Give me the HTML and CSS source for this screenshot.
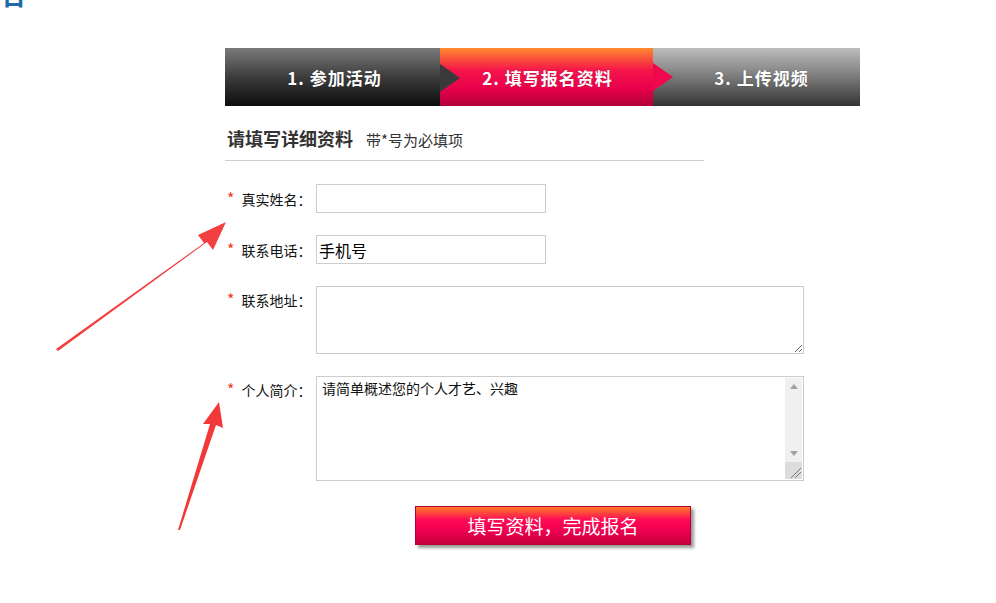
FILE: index.html
```html
<!DOCTYPE html>
<html lang="zh">
<head>
<meta charset="utf-8">
<link rel="stylesheet" href="styles.css">
</head>
<body>
<h1 class="page-title">报名</h1>
<div class="wrap">
  <div class="steps">
    <div class="step step-done">1. 参加活动</div>
    <div class="step step-active">2. 填写报名资料</div>
    <div class="step step-next">3. 上传视频</div>
  </div>
  <div class="form-head">
    <span class="form-title">请填写详细资料</span>
    <span class="form-note">带*号为必填项</span>
  </div>
  <form class="form">
    <div class="row">
      <label class="label"><span class="req">*</span>真实姓名：</label>
      <input class="input" type="text" value="">
    </div>
    <div class="row">
      <label class="label"><span class="req">*</span>联系电话：</label>
      <input class="input input-big" type="text" value="手机号">
    </div>
    <div class="row row-area">
      <label class="label"><span class="req">*</span>联系地址：</label>
      <textarea class="area area-addr"></textarea>
    </div>
    <div class="row row-area">
      <label class="label"><span class="req">*</span>个人简介：</label>
      <div class="area-box">
        <textarea class="area-intro">请简单概述您的个人才艺、兴趣</textarea>
        <div class="scrollbar">
          <span class="sb-up"></span>
          <span class="sb-track"></span>
          <span class="sb-down"></span>
          <span class="sb-corner">
            <svg width="17" height="17" viewBox="0 0 17 17"><path d="M6 16 L16 6 M10 16 L16 10" stroke="#777" stroke-width="1" fill="none"/></svg>
          </span>
        </div>
      </div>
    </div>
    <div class="actions">
      <button class="submit" type="button">填写资料，完成报名</button>
    </div>
  </form>
</div>
<svg class="arrow arrow-a" width="180" height="130" viewBox="0 0 180 130">
  <path d="M2 127 L150 21 L144 13 L172 0 L159 28 L153 20 L4 129 Z" fill="#f24040"/>
</svg>
<svg class="arrow arrow-b" width="60" height="130" viewBox="0 0 60 130">
  <path d="M1 128 L33 22 L26 22 L42 0 L46 26 L39 23 L3 128 Z" fill="#f23838"/>
</svg>
</body>
</html>
```
FILE: styles.css
```css
html, body {
  margin: 0;
  padding: 0;
  background: #fff;
}
body {
  position: relative;
  display: flow-root;
  width: 996px;
  height: 603px;
  overflow: hidden;
  font-family: "Noto Sans CJK SC", "Liberation Sans", sans-serif;
  color: #222;
}
.page-title {
  margin: -25px 0 0 -28px;
  height: 37px;
  font-size: 27px;
  line-height: 37px;
  color: #1e6aa8;
  font-weight: bold;
  white-space: nowrap;
}
.wrap {
  padding-left: 225px;
  margin-top: 36px;
}
.steps {
  display: flex;
  width: 635px;
  height: 58px;
}
.step {
  position: relative;
  display: flex;
  align-items: center;
  justify-content: center;
  color: #fff;
  font-weight: bold;
  font-size: 17px;
  letter-spacing: 1px;
  text-shadow: 0 0 1px rgba(0,0,0,0.4);
  white-space: pre;
}
.step-done {
  width: 215px;
  background: linear-gradient(#7a7a7a, #3c3c3c 50%, #0c0c0c);
  padding-left: 4px;
  box-sizing: border-box;
  z-index: 2;
}
.step-done::after {
  content: "";
  position: absolute;
  left: 100%;
  top: 16px;
  border-left: 20px solid #3a3a3a;
  border-top: 14px solid transparent;
  border-bottom: 14px solid transparent;
}
.step-active {
  width: 213px;
  background: linear-gradient(#ff8a2c, #f5164a 38%, #e8004c 70%, #b2003a);
  z-index: 1;
  padding-left: 2px;
  box-sizing: border-box;
}
.step-active::after {
  content: "";
  position: absolute;
  left: 100%;
  top: 15px;
  border-left: 20px solid #f0084c;
  border-top: 14px solid transparent;
  border-bottom: 14px solid transparent;
}
.step-next {
  width: 207px;
  background: linear-gradient(#bdbdbd, #7a7a7a 50%, #333);
  padding-left: 10px;
  box-sizing: border-box;
}
.form-head {
  display: flex;
  align-items: baseline;
  width: 479px;
  height: 55px;
  box-sizing: border-box;
  padding: 19px 0 0 2px;
  border-bottom: 1px solid #cfcfcf;
}
.form-title {
  font-size: 18px;
  font-weight: bold;
  color: #333;
}
.form-note {
  font-size: 15px;
  color: #333;
  margin-left: 13px;
}
.form {
  margin: 0;
  padding-top: 23px;
}
.row {
  display: flex;
  align-items: center;
  margin-bottom: 22px;
}
.row-area {
  align-items: flex-start;
}
.row-area .label {
  padding-top: 3px;
}
.label {
  width: 91px;
  font-size: 14px;
  color: #111;
  padding-left: 2px;
  box-sizing: border-box;
  white-space: nowrap;
  margin-top: -2px;
}
.req {
  color: #f23a1a;
  margin-right: 7px;
  font-size: 16px;
}
.input {
  width: 230px;
  height: 29px;
  box-sizing: border-box;
  border: 1px solid #ccc;
  padding: 0 2px;
  font-family: "Noto Sans CJK SC", sans-serif;
  font-size: 16px;
  color: #000;
  outline: none;
  margin: 0;
}
.area {
  width: 488px;
  box-sizing: border-box;
  border: 1px solid #ccc;
  margin: 0;
  padding: 2px 5px;
  font-family: "Noto Sans CJK SC", sans-serif;
  font-size: 14px;
  color: #111;
  outline: none;
}
.area-addr {
  height: 68px;
}
.area-box {
  display: flex;
  width: 488px;
  height: 105px;
  box-sizing: border-box;
  border: 1px solid #ccc;
  background: #fff;
}
.area-intro {
  flex: 1;
  border: 0;
  margin: 0;
  padding: 1px 5px;
  resize: none;
  outline: none;
  font-family: "Noto Sans CJK SC", sans-serif;
  font-size: 14px;
  color: #111;
  overflow: hidden;
}
.scrollbar {
  width: 17px;
  display: flex;
  flex-direction: column;
  align-items: center;
  background: #f0f0f0;
  margin: 1px 1px 1px 0;
}
.sb-up, .sb-down {
  height: 17px;
  width: 17px;
  display: flex;
  align-items: center;
  justify-content: center;
}
.sb-up::before {
  content: "";
  border-bottom: 5px solid #a3a3a3;
  border-left: 4px solid transparent;
  border-right: 4px solid transparent;
}
.sb-down::before {
  content: "";
  border-top: 5px solid #a3a3a3;
  border-left: 4px solid transparent;
  border-right: 4px solid transparent;
}
.sb-track {
  flex: 1;
}
.sb-corner {
  height: 17px;
  width: 17px;
  background: #dcdcdc;
  display: block;
  line-height: 0;
}
.actions {
  padding-left: 190px;
  padding-top: 3px;
}
.submit {
  width: 276px;
  height: 39px;
  border: 1px solid #b80030;
  background: linear-gradient(#ff7a2a, #ff0a56 35%, #ee0050 65%, #c4003c);
  color: #fff;
  font-family: "Noto Sans CJK SC", sans-serif;
  font-size: 19px;
  box-shadow: 3px 3px 3px #9a9a9a;
  padding: 0;
  cursor: pointer;
}
.arrow {
  position: absolute;
}
.arrow-a {
  left: 54px;
  top: 222px;
}
.arrow-b {
  left: 177px;
  top: 402px;
}
```
